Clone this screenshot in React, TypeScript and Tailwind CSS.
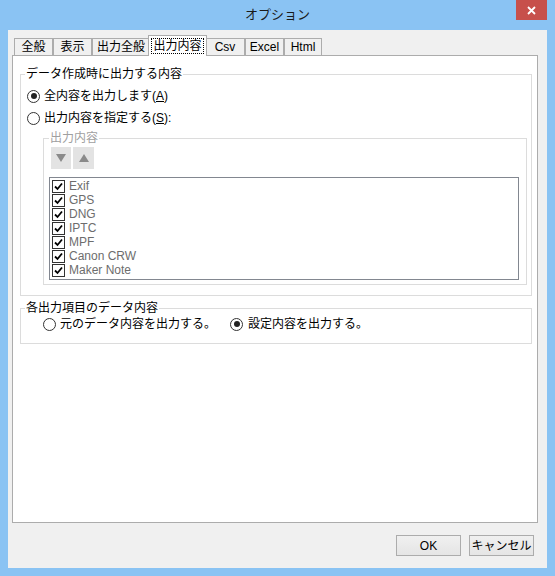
import React from "react";

function Radio({ checked }: { checked?: boolean }) {
  return (
    <span className="w-[13px] h-[13px] rounded-full border border-[#333333] bg-white flex items-center justify-center shrink-0">
      {checked && <span className="w-[6px] h-[6px] rounded-full bg-[#222222]" />}
    </span>
  );
}

function Check() {
  return (
    <span className="w-[13px] h-[13px] border border-[#333333] bg-white flex items-center justify-center shrink-0">
      <svg width="9" height="9" viewBox="0 0 9 9">
        <path d="M1 4.5 L3.5 7 L8 1.5" stroke="#000" strokeWidth="1.8" fill="none" />
      </svg>
    </span>
  );
}

const tabs = [
  { label: "全般", w: "w-[39px]" },
  { label: "表示", w: "w-[39px]" },
  { label: "出力全般", w: "w-[58px]" },
  { label: "出力内容", w: "w-[59px]", active: true },
  { label: "Csv", w: "w-[40px]" },
  { label: "Excel", w: "w-[39px]" },
  { label: "Html", w: "w-[38px]" },
];

const items = ["Exif", "GPS", "DNG", "IPTC", "MPF", "Canon CRW", "Maker Note"];

export default function App() {
  return (
    <div className="w-[555px] h-[576px] bg-[#8ac3f3] flex flex-col relative font-['Liberation_Sans','Noto_Sans_CJK_JP',sans-serif] text-[12px] leading-[14px] text-black">
      {/* Title bar */}
      <div className="h-[30px] flex items-center justify-center shrink-0">
        <span className="text-[13px] text-[#1a1a1a]">オプション</span>
      </div>
      <div className="absolute right-[8px] top-0 w-[31px] h-[20px] bg-[#c7504b] flex items-center justify-center">
        <svg width="9" height="9" viewBox="0 0 9 9">
          <path d="M1 1 L8 8 M8 1 L1 8" stroke="#fff" strokeWidth="1.8" />
        </svg>
      </div>

      {/* Client */}
      <div className="flex-1 mx-[8px] mb-[8px] bg-[#f0f0f0] flex flex-col">
        {/* Tabs */}
        <div className="h-[25px] flex items-end pl-[6px] shrink-0">
          {tabs.map((t) =>
            t.active ? (
              <div
                key={t.label}
                className={`${t.w} h-[21px] -mx-[2px] -mb-px relative z-10 bg-white border-l border-t border-r border-[#acacac] flex items-start justify-center pt-[2px]`}
              >
                <span className="border border-dotted border-black px-[1px] leading-[14px]">{t.label}</span>
              </div>
            ) : (
              <div
                key={t.label}
                className={`${t.w} h-[17px] bg-[#f0f0f0] border-l border-t border-r border-[#acacac] flex items-center justify-center`}
              >
                {t.label}
              </div>
            )
          )}
        </div>

        {/* Panel */}
        <div className="flex-1 ml-[4px] mr-[9px] bg-white border border-[#acacac] flex flex-col">
          {/* Group 1 */}
          <fieldset className="mt-[11px] ml-[7px] mr-[5px] border border-[#dcdcdc] px-0 pb-[10px] min-w-0">
            <legend className="ml-[4px] px-[1px] leading-[14px]">データ作成時に出力する内容</legend>
            <div className="mt-[4px] pl-[6px] h-[22px] flex items-center gap-[4px]">
              <Radio checked />
              <span>全内容を出力します(<span className="underline">A</span>)</span>
            </div>
            <div className="pl-[6px] h-[22px] flex items-center gap-[4px]">
              <Radio />
              <span>出力内容を指定する(<span className="underline">S</span>):</span>
            </div>

            {/* Inner group */}
            <fieldset className="mt-[2px] ml-[22px] mr-[4px] border border-[#dcdcdc] px-0 pb-[4px] min-w-0">
              <legend className="ml-[5px] px-[1px] leading-[14px] text-[#a0a0a0]">出力内容</legend>
              <div className="mt-[2px] ml-[7px] flex gap-[2px]">
                <div className="w-[20px] h-[22px] bg-[#e3e3e3] flex items-center justify-center">
                  <svg width="10" height="8" viewBox="0 0 10 8">
                    <path d="M0 0 L10 0 L5 8 Z" fill="#8a8a8a" />
                  </svg>
                </div>
                <div className="w-[21px] h-[22px] bg-[#e3e3e3] flex items-center justify-center">
                  <svg width="10" height="8" viewBox="0 0 10 8">
                    <path d="M0 8 L10 8 L5 0 Z" fill="#8a8a8a" />
                  </svg>
                </div>
              </div>
              <div className="mt-[8px] ml-[5px] mr-[7px] h-[103px] border border-[#828790] bg-white flex flex-col pt-[1px]">
                {items.map((it) => (
                  <div key={it} className="h-[14px] flex items-center pl-[2px] gap-[4px]">
                    <Check />
                    <span className="text-[#6d6d6d] leading-[14px]">{it}</span>
                  </div>
                ))}
              </div>
            </fieldset>
          </fieldset>

          {/* Group 2 */}
          <fieldset className="mt-[5px] ml-[7px] mr-[5px] border border-[#dcdcdc] px-0 pb-[12px] min-w-0">
            <legend className="ml-[4px] px-[1px] leading-[14px]">各出力項目のデータ内容</legend>
            <div className="mt-[2px] h-[14px] flex items-center pl-[22px]">
              <div className="w-[187px] flex items-center gap-[4px]">
                <Radio />
                <span>元のデータ内容を出力する。</span>
              </div>
              <div className="flex items-center gap-[5px]">
                <Radio checked />
                <span>設定内容を出力する。</span>
              </div>
            </div>
          </fieldset>
        </div>

        {/* Buttons */}
        <div className="flex justify-end gap-[8px] mt-[12px] mb-[12px] mr-[13px] shrink-0">
          <button className="w-[65px] h-[21px] border border-[#acacac] bg-gradient-to-b from-[#f0f0f0] to-[#e5e5e5] flex items-center justify-center">
            OK
          </button>
          <button className="w-[65px] h-[21px] border border-[#acacac] bg-gradient-to-b from-[#f0f0f0] to-[#e5e5e5] flex items-center justify-center">
            キャンセル
          </button>
        </div>
      </div>
    </div>
  );
}
